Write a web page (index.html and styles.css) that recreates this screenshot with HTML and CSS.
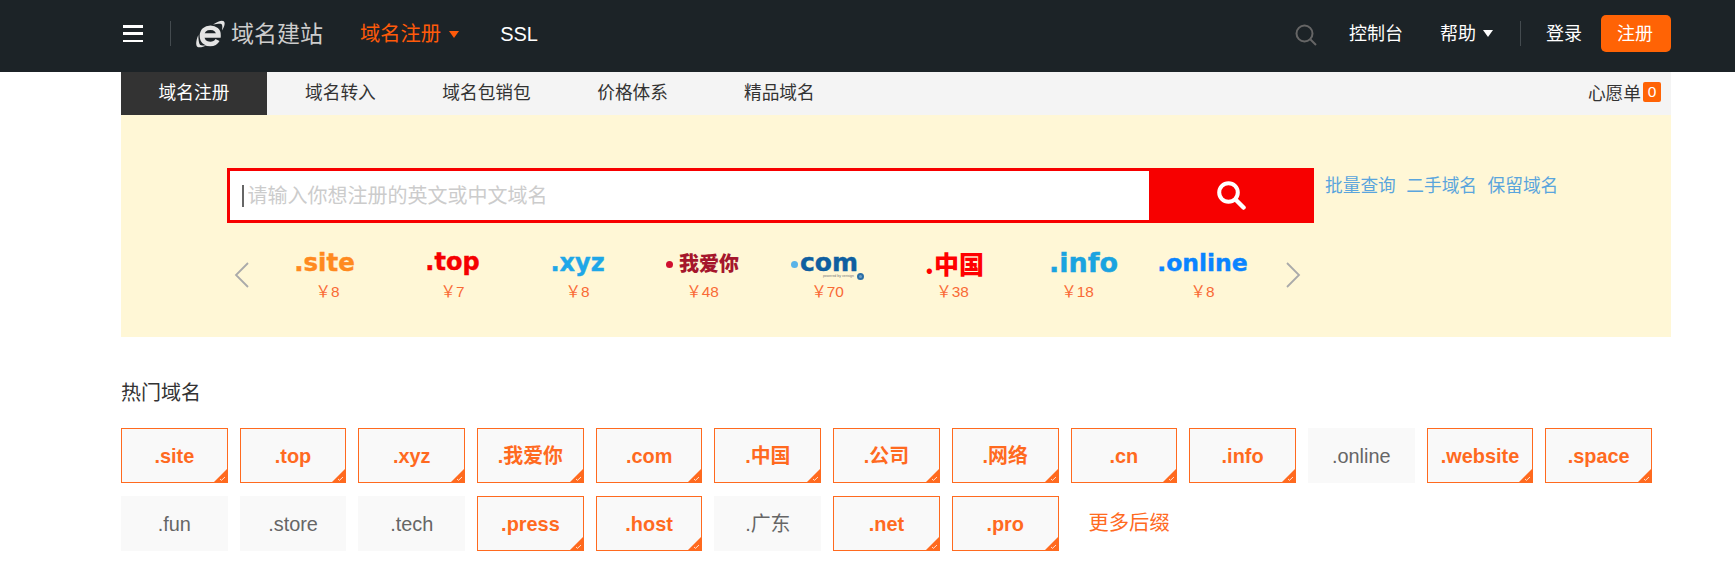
FILE: index.html
```html
<!DOCTYPE html>
<html lang="zh-CN">
<head>
<meta charset="utf-8">
<title>域名注册</title>
<link rel="stylesheet" href="styles.css">
</head>
<body>
<header class="topbar">
  <div class="topbar-inner">
    <button class="burger" aria-label="菜单"><span></span><span></span><span></span></button>
    <i class="vline vline-a"></i>
    <a class="brand">
      <svg class="brand-e" width="29" height="28" viewBox="0 0 29 28" aria-hidden="true">
        <path d="M7 15.500H22.500C22.800 10.500 19 7.800 14.500 7.800C9.500 7.800 6 11 6 16C6 20.800 9.500 24 14.300 24C17.500 24 20 22.800 21.500 20" fill="none" stroke="#e4e4e4" stroke-width="4.600"/>
        <path d="M17 4.500C22 1.200 26 -.200 27.800 1.200C29.500 2.800 28.500 6.500 26 10.500C26.500 7 26.500 4.800 25.300 4C23.800 3.300 21 3.800 17 4.500Z" fill="#e4e4e4"/>
        <path d="M2.300 15C.200 20 -.500 24.800 1 26.500C2.800 28.300 7 27 11 25C7.500 25.800 5 25.800 4 24.800C2.800 23.300 2.500 19.500 2.300 15Z" fill="#e4e4e4"/>
      </svg>
      <span class="brand-text">域名建站</span>
    </a>
    <a class="nav-main nav-active">域名注册<i class="caret caret-orange"></i></a>
    <a class="nav-main nav-ssl">SSL</a>
    <span class="spacer"></span>
    <svg class="nav-search" width="22" height="22" viewBox="0 0 22 22" aria-hidden="true">
      <circle cx="9.500" cy="9.500" r="8" fill="none" stroke="#666" stroke-width="2"/>
      <path d="M15.500 15.500l5.500 5.500" stroke="#666" stroke-width="2"/>
    </svg>
    <a class="nav-link nav-console">控制台</a>
    <a class="nav-link nav-help">帮助<i class="caret caret-white"></i></a>
    <i class="vline vline-b"></i>
    <a class="nav-link nav-login">登录</a>
    <a class="nav-register">注册</a>
  </div>
</header>

<main class="page">
  <nav class="tabs">
    <a class="tab tab-current">域名注册</a>
    <a class="tab tab-second">域名转入</a>
    <a class="tab">域名包销包</a>
    <a class="tab">价格体系</a>
    <a class="tab tab-last">精品域名</a>
    <span class="spacer"></span>
    <a class="wish">心愿单<b class="wish-count">0</b></a>
  </nav>

  <section class="panel">
    <div class="search-row">
      <form class="search-box">
        <span class="search-field"><i class="text-cursor"></i><input class="search-input" placeholder="请输入你想注册的英文或中文域名"></span>
        <button class="search-btn" type="button" aria-label="搜索">
          <svg width="30" height="30" viewBox="0 0 30 30" aria-hidden="true">
            <circle cx="12.500" cy="12.500" r="9.300" fill="none" stroke="#fff" stroke-width="4"/>
            <path d="M19.500 19.500l8 8" stroke="#fff" stroke-width="4.500" stroke-linecap="round"/>
          </svg>
        </button>
      </form>
      <div class="search-links">
        <a>批量查询</a><a>二手域名</a><a>保留域名</a>
      </div>
    </div>
    <div class="carousel">
      <svg class="arrow arrow-left" width="15" height="26" viewBox="0 0 15 26" aria-hidden="true"><path d="M14 1L2 13l12 12" fill="none" stroke="#aaa" stroke-width="1.800"/></svg>
      <ul class="promo-list">
        <li class="promo"><span class="promo-logo c-site">.site</span><span class="promo-price">￥8</span></li>
        <li class="promo"><span class="promo-logo c-top">.top</span><span class="promo-price">￥7</span></li>
        <li class="promo"><span class="promo-logo c-xyz">.xyz</span><span class="promo-price">￥8</span></li>
        <li class="promo"><span class="promo-logo c-love"><i class="love-dot"></i>我爱你</span><span class="promo-price">￥48</span></li>
        <li class="promo"><span class="promo-logo c-com"><i class="com-dot"></i>com<small class="com-note">powered by verisign</small><i class="com-seal"></i></span><span class="promo-price">￥70</span></li>
        <li class="promo"><span class="promo-logo c-cn">.中国</span><span class="promo-price">￥38</span></li>
        <li class="promo"><span class="promo-logo c-info">.info</span><span class="promo-price">￥18</span></li>
        <li class="promo"><span class="promo-logo c-online">.online</span><span class="promo-price">￥8</span></li>
      </ul>
      <svg class="arrow arrow-right" width="15" height="26" viewBox="0 0 15 26" aria-hidden="true"><path d="M1 1l12 12L1 25" fill="none" stroke="#aaa" stroke-width="1.800"/></svg>
    </div>
  </section>

  <section class="hot">
    <h2 class="hot-title">热门域名</h2>
    <div class="chips">
      <a class="chip on">.site<svg class="tick" viewBox="0 0 13 13"><path d="M13 0V13H0z" fill="#ff6a1f"/><path d="M6 10l1.500 1.300L11 8" fill="none" stroke="#fff" stroke-width=".8"/></svg></a>
      <a class="chip on">.top<svg class="tick" viewBox="0 0 13 13"><path d="M13 0V13H0z" fill="#ff6a1f"/><path d="M6 10l1.500 1.300L11 8" fill="none" stroke="#fff" stroke-width=".8"/></svg></a>
      <a class="chip on">.xyz<svg class="tick" viewBox="0 0 13 13"><path d="M13 0V13H0z" fill="#ff6a1f"/><path d="M6 10l1.500 1.300L11 8" fill="none" stroke="#fff" stroke-width=".8"/></svg></a>
      <a class="chip on">.我爱你<svg class="tick" viewBox="0 0 13 13"><path d="M13 0V13H0z" fill="#ff6a1f"/><path d="M6 10l1.500 1.300L11 8" fill="none" stroke="#fff" stroke-width=".8"/></svg></a>
      <a class="chip on">.com<svg class="tick" viewBox="0 0 13 13"><path d="M13 0V13H0z" fill="#ff6a1f"/><path d="M6 10l1.500 1.300L11 8" fill="none" stroke="#fff" stroke-width=".8"/></svg></a>
      <a class="chip on">.中国<svg class="tick" viewBox="0 0 13 13"><path d="M13 0V13H0z" fill="#ff6a1f"/><path d="M6 10l1.500 1.300L11 8" fill="none" stroke="#fff" stroke-width=".8"/></svg></a>
      <a class="chip on">.公司<svg class="tick" viewBox="0 0 13 13"><path d="M13 0V13H0z" fill="#ff6a1f"/><path d="M6 10l1.500 1.300L11 8" fill="none" stroke="#fff" stroke-width=".8"/></svg></a>
      <a class="chip on">.网络<svg class="tick" viewBox="0 0 13 13"><path d="M13 0V13H0z" fill="#ff6a1f"/><path d="M6 10l1.500 1.300L11 8" fill="none" stroke="#fff" stroke-width=".8"/></svg></a>
      <a class="chip on">.cn<svg class="tick" viewBox="0 0 13 13"><path d="M13 0V13H0z" fill="#ff6a1f"/><path d="M6 10l1.500 1.300L11 8" fill="none" stroke="#fff" stroke-width=".8"/></svg></a>
      <a class="chip on">.info<svg class="tick" viewBox="0 0 13 13"><path d="M13 0V13H0z" fill="#ff6a1f"/><path d="M6 10l1.500 1.300L11 8" fill="none" stroke="#fff" stroke-width=".8"/></svg></a>
      <a class="chip">.online</a>
      <a class="chip on">.website<svg class="tick" viewBox="0 0 13 13"><path d="M13 0V13H0z" fill="#ff6a1f"/><path d="M6 10l1.500 1.300L11 8" fill="none" stroke="#fff" stroke-width=".8"/></svg></a>
      <a class="chip on">.space<svg class="tick" viewBox="0 0 13 13"><path d="M13 0V13H0z" fill="#ff6a1f"/><path d="M6 10l1.500 1.300L11 8" fill="none" stroke="#fff" stroke-width=".8"/></svg></a>
      <a class="chip">.fun</a>
      <a class="chip">.store</a>
      <a class="chip">.tech</a>
      <a class="chip on">.press<svg class="tick" viewBox="0 0 13 13"><path d="M13 0V13H0z" fill="#ff6a1f"/><path d="M6 10l1.500 1.300L11 8" fill="none" stroke="#fff" stroke-width=".8"/></svg></a>
      <a class="chip on">.host<svg class="tick" viewBox="0 0 13 13"><path d="M13 0V13H0z" fill="#ff6a1f"/><path d="M6 10l1.500 1.300L11 8" fill="none" stroke="#fff" stroke-width=".8"/></svg></a>
      <a class="chip">.广东</a>
      <a class="chip on">.net<svg class="tick" viewBox="0 0 13 13"><path d="M13 0V13H0z" fill="#ff6a1f"/><path d="M6 10l1.500 1.300L11 8" fill="none" stroke="#fff" stroke-width=".8"/></svg></a>
      <a class="chip on">.pro<svg class="tick" viewBox="0 0 13 13"><path d="M13 0V13H0z" fill="#ff6a1f"/><path d="M6 10l1.500 1.300L11 8" fill="none" stroke="#fff" stroke-width=".8"/></svg></a>
      <a class="more">更多后缀</a>
    </div>
  </section>
</main>
</body>
</html>
```
FILE: styles.css
```css
* { box-sizing: border-box; }
html, body { margin: 0; padding: 0; background: #fff; overflow: hidden; }
body { font-family: "Liberation Sans", "Noto Sans CJK SC", sans-serif; color: #333; }
a { color: inherit; text-decoration: none; }
i { font-style: normal; }
ul { list-style: none; margin: 0; padding: 0; }

.topbar { height: 72px; background: #1c2327; }
.topbar-inner { width: 1550px; height: 67px; margin-left: 121px; display: flex; align-items: center; }
.spacer { flex: 1; }

.burger { width: 20px; height: 17px; margin-left: 2px; padding: 0; border: 0; background: none; display: flex; flex-direction: column; justify-content: space-between; }
.burger span { display: block; height: 2.500px; background: #fff; }
.vline { width: 1px; height: 25px; background: #444b4f; }
.vline-a { margin-left: 27px; }
.vline-b { margin-left: 27px; }

.brand { display: flex; align-items: center; margin-left: 25px; }
.brand-e { display: block; }
.brand-text { margin-left: 6px; font-size: 23px; color: #ccc; line-height: 30px; padding-top: 1px; }

.nav-main { font-size: 20.300px; color: #fff; display: flex; align-items: center; line-height: 30px; padding-top: 1px; }
.nav-active { margin-left: 37px; color: #ff5a0a; }
.nav-ssl { margin-left: 41px; font-size: 20px; }
.caret { display: block; width: 0; height: 0; border-left: 5.500px solid transparent; border-right: 5.500px solid transparent; margin-left: 8px; }
.caret-orange { border-top: 7px solid #ff5a0a; }
.caret-white { border-top: 7px solid #fff; margin-left: 7px; }

.nav-search { display: block; margin-top: 2px; }
.nav-link { font-size: 18px; color: #fff; display: flex; align-items: center; line-height: 28px; }
.nav-console { margin-left: 32px; }
.nav-help { margin-left: 37px; }
.nav-login { margin-left: 25px; }
.nav-register { width: 70px; height: 37px; margin-left: 19px; padding-right: 2px; background: #ff6305; border-radius: 5px; color: #fff; font-size: 18px; line-height: 39px; text-align: center; }

.page { width: 1550px; margin-left: 121px; }
.tabs { height: 43px; background: #f4f4f4; display: flex; align-items: center; }
.tab { font-size: 17.700px; line-height: 43px; margin-left: 66.500px; color: #333; white-space: nowrap; }
.tab-current { width: 146px; margin-left: 0; background: #333; color: #fff; text-align: center; }
.tab-second { margin-left: 38px; }
.tab-last { margin-left: 76px; }
.wish { display: flex; align-items: center; font-size: 17.700px; margin-right: 10px; padding-bottom: 3px; color: #333; }
.wish-count { width: 18px; height: 20px; margin-left: 2px; background: #ff6305; border-radius: 2px; color: #fff; font-size: 15.500px; font-weight: 400; line-height: 20px; text-align: center; }

.panel { height: 222px; padding-top: 53px; background: #fff7d6; }
.search-row { display: flex; align-items: flex-start; margin-left: 106px; }
.search-box { width: 1087px; height: 55px; display: flex; margin: 0; border: 3px solid #f70000; border-right: 0; background: #fff; }
.search-field { flex: 1; display: flex; align-items: center; padding-left: 12px; }
.text-cursor { display: block; width: 1.500px; height: 22px; background: #666; }
.search-input { flex: 1; height: 100%; margin-left: 4px; padding: 2px 0 0; border: 0; outline: 0; background: none; font: 20px "Liberation Sans", "Noto Sans CJK SC", sans-serif; }
.search-input::placeholder { color: #ccc; opacity: 1; }
.search-btn { width: 165px; margin: -3px 0; padding: 0 1px 1px 0; border: 0; background: #f70000; display: flex; align-items: center; justify-content: center; }
.search-btn svg { display: block; }
.search-links { display: flex; gap: 10.500px; margin-left: 11px; font-size: 17.700px; line-height: 36px; color: #5aa5dd; }

.carousel { display: flex; align-items: center; height: 58px; margin-top: 23px; margin-left: 113px; }
.arrow { display: block; flex: none; }
.promo-list { width: 1000px; margin-left: 16px; display: grid; grid-template-columns: repeat(8, 1fr); }
.arrow-right { margin-left: 21px; }
.promo { display: flex; flex-direction: column; align-items: center; }
.promo-logo { position: relative; height: 30px; display: flex; align-items: center; font-family: "DejaVu Sans", sans-serif; font-weight: 700; font-size: 23.500px; line-height: 30px; white-space: nowrap; -webkit-text-stroke: .4px currentColor; transform: translateY(-1px); }
.promo-price { margin-top: 3px; font-size: 15.400px; line-height: 20px; color: #f96a35; }
.c-site { color: #ff8a1f; font-size: 24.500px; transform: translate(-3px, -1px); }
.c-top { color: #f50000; font-size: 24px; transform: translateY(-2px); }
.c-xyz { color: #1ea7e8; font-size: 24px; }
.c-love { color: #a5162c; font-family: "Noto Sans CJK SC", sans-serif; font-weight: 900; font-size: 20px; -webkit-text-stroke: 0; }
.love-dot { width: 7px; height: 7px; margin-right: 6px; margin-top: 4px; border-radius: 50%; background: #d01030; }
.c-com { color: #0f5fa0; font-size: 25px; padding-right: 6px; }
.com-dot { width: 7px; height: 7px; margin-right: 2px; margin-top: 3px; border-radius: 50%; background: #5ab4e8; }
.com-note { position: absolute; right: 10px; top: 26px; font: 3.500px "Liberation Sans", sans-serif; color: #777; -webkit-text-stroke: 0; }
.com-seal { position: absolute; right: 0; top: 25px; width: 7px; height: 7px; border-radius: 50%; border: 2px solid #2a6ea6; background: #6d9cc4; }
.c-cn { color: #f00; font-family: "Noto Sans CJK SC", sans-serif; font-weight: 900; font-size: 25px; -webkit-text-stroke: 0; transform: translate(2px, -1px); }
.c-info { color: #1aa3e0; font-size: 27px; transform: translate(6px, -1px); }
.c-online { color: #0a84ff; }

.hot-title { margin: 44px 0 0; font-size: 20px; font-weight: 400; line-height: 24px; color: #333; }
.chips { width: 1531px; margin-top: 23px; display: grid; grid-template-columns: repeat(13, 1fr); column-gap: 12px; row-gap: 13px; }
.chip { position: relative; height: 55px; background: #f9f9f9; color: #666; font-size: 19.900px; line-height: 57px; text-align: center; white-space: nowrap; overflow: hidden; }
.chip.on { border: 1px solid #ff6a1f; color: #ff6a1f; font-weight: 700; line-height: 55px; }
.tick { position: absolute; right: 0; bottom: 0; width: 13px; height: 13px; display: block; }
.more { font-size: 20.300px; line-height: 55px; color: #ff6a1f; padding-left: 18px; white-space: nowrap; }
```
